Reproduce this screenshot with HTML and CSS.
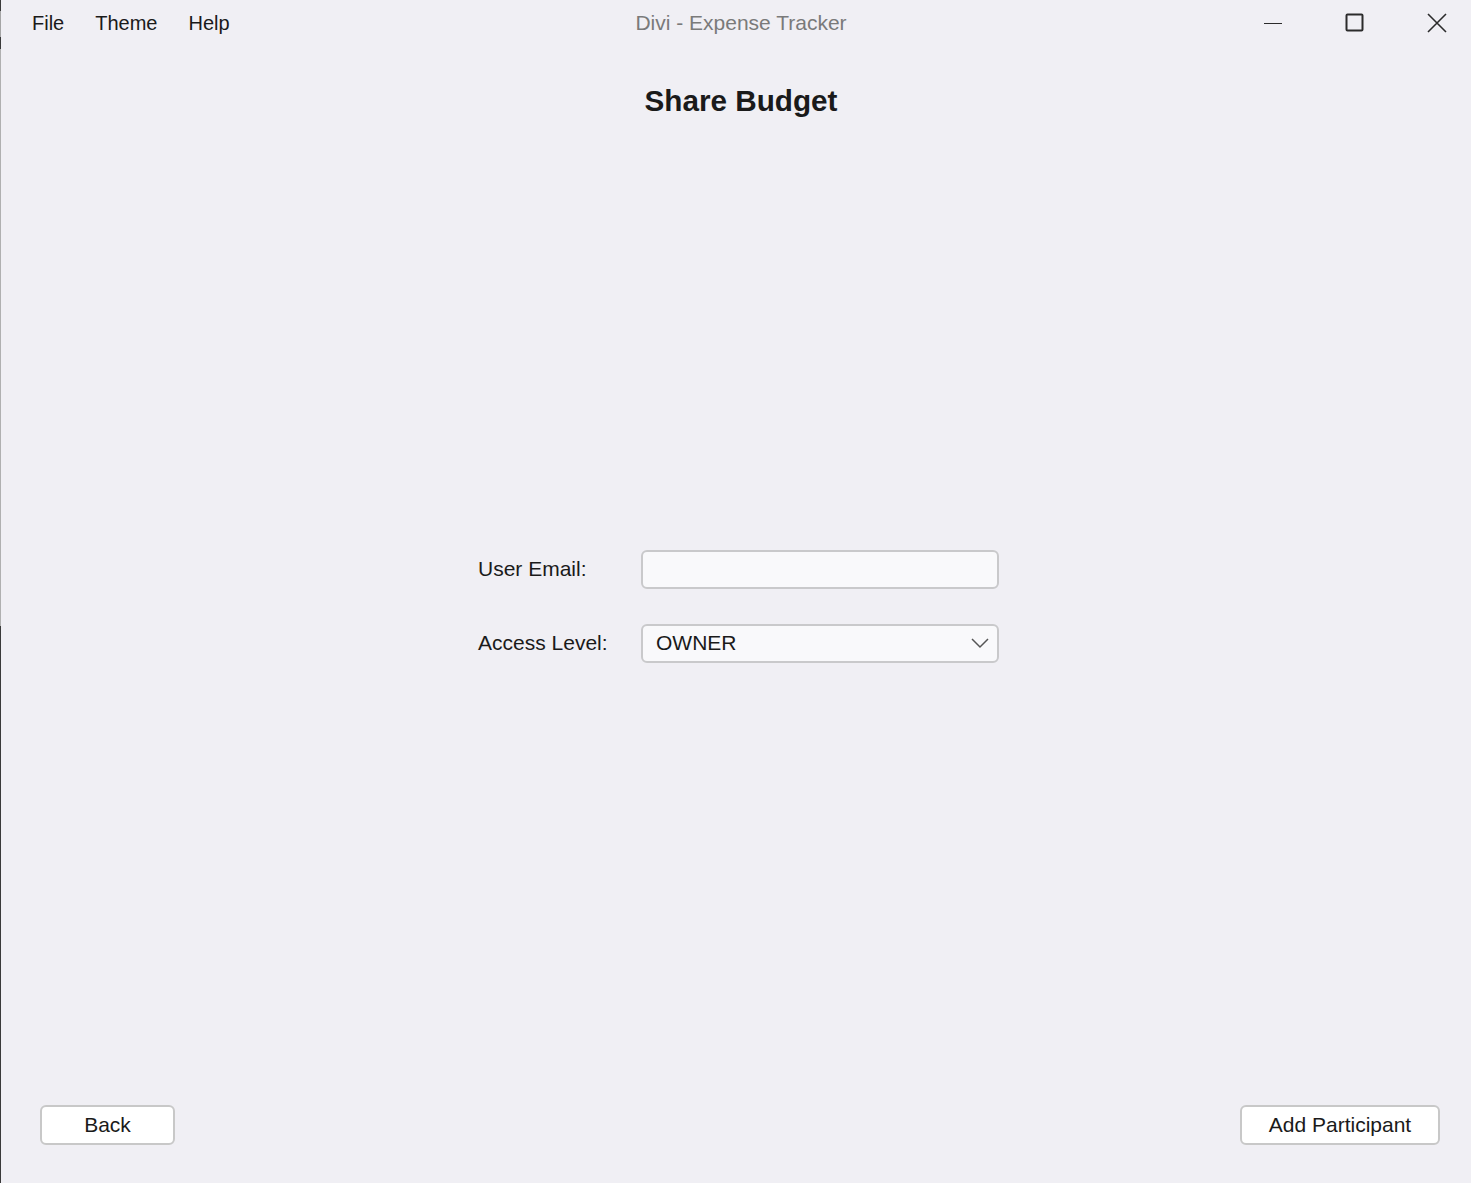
FILE: index.html
```html
<!DOCTYPE html>
<html lang="en">
<head>
  <meta charset="UTF-8">
  <title>Divi - Expense Tracker</title>
  <link rel="stylesheet" href="styles.css">
</head>
<body>
  <div class="window">
    <div class="menubar">
      <div class="menu">
        <span class="menu-item">File</span>
        <span class="menu-item">Theme</span>
        <span class="menu-item">Help</span>
      </div>
      <div class="app-title">Divi - Expense Tracker</div>
      <div class="controls">
        <span class="ctrl">
          <svg width="20" height="20" viewBox="0 0 20 20"><line x1="1" y1="10.5" x2="19" y2="10.5" stroke="#2b2b2b" stroke-width="1"/></svg>
        </span>
        <span class="ctrl">
          <svg width="20" height="20" viewBox="0 0 20 20"><rect x="1.5" y="1.5" width="16" height="16" rx="1" fill="none" stroke="#2b2b2b" stroke-width="2"/></svg>
        </span>
        <span class="ctrl">
          <svg width="22" height="22" viewBox="0 0 22 22"><path d="M2 2 L20 20 M20 2 L2 20" stroke="#2b2b2b" stroke-width="1.6" fill="none"/></svg>
        </span>
      </div>
    </div>

    <h1 class="page-title">Share Budget</h1>

    <div class="content">
      <div class="share-form">
        <label class="label">User Email:</label>
        <div class="field"></div>
        <label class="label">Access Level:</label>
        <div class="field select">
          <span>OWNER</span>
          <svg class="chevron" width="20" height="12" viewBox="0 0 20 12"><polyline points="2,2 10,10 18,2" fill="none" stroke="#555" stroke-width="1.5"/></svg>
        </div>
      </div>
    </div>

    <div class="footer">
      <button class="btn back">Back</button>
      <button class="btn add">Add Participant</button>
    </div>
  </div>
</body>
</html>
```

FILE: styles.css
```css
html, body {
  margin: 0;
  padding: 0;
  height: 100%;
}

body {
  font-family: "Liberation Sans", Arial, sans-serif;
  background-color: #f0eff4;
  color: #1a1a1a;
}

.window {
  height: 100vh;
  box-sizing: border-box;
  display: flex;
  flex-direction: column;
  border-left: 1px solid transparent;
  border-image: linear-gradient(to bottom, #3a3a3a 0, #3a3a3a 12px, #a5a5a5 12px, #a5a5a5 38px, #3a3a3a 38px, #3a3a3a 50px, #b0b0b0 50px, #b0b0b0 626px, #3a3a3a 626px) 1;
}

.menubar {
  height: 46px;
  display: grid;
  grid-template-columns: 1fr auto 1fr;
  align-items: center;
}

.menu {
  display: flex;
  padding-left: 31px;
  gap: 31px;
  font-size: 20px;
}

.app-title {
  font-size: 21px;
  color: #7a7a7a;
  padding-left: 10px;
}

.controls {
  display: flex;
  justify-content: flex-end;
  gap: 36px;
  padding-right: 11px;
}

.ctrl {
  width: 46px;
  height: 46px;
  display: flex;
  align-items: center;
  justify-content: center;
}

.page-title {
  margin: 0;
  padding: 37px 0 0 10px;
  text-align: center;
  font-size: 29.7px;
  font-weight: bold;
  line-height: 36px;
}

.content {
  flex: 1;
  display: flex;
  align-items: center;
  justify-content: center;
  padding-bottom: 12px;
}

.share-form {
  display: grid;
  grid-template-columns: 163px 358px;
  row-gap: 35px;
  align-items: center;
  margin-left: 5px;
}

.label {
  font-size: 21px;
}

.field {
  height: 39px;
  box-sizing: border-box;
  border: 2px solid #c9c9cb;
  border-radius: 6px;
  background-color: #f9f9fb;
}

.field.select {
  display: flex;
  align-items: center;
  justify-content: space-between;
  padding: 0 7px 0 13px;
  font-size: 21px;
}

.footer {
  display: flex;
  justify-content: space-between;
  padding: 0 31px 38px 39px;
}

.btn {
  height: 40px;
  box-sizing: border-box;
  background-color: #ffffff;
  border: 2px solid #c8c8c8;
  border-radius: 6px;
  font-family: "Liberation Sans", Arial, sans-serif;
  font-size: 21px;
  color: #1a1a1a;
  padding: 0;
}

.btn.back {
  width: 135px;
}

.btn.add {
  width: 200px;
}
```
